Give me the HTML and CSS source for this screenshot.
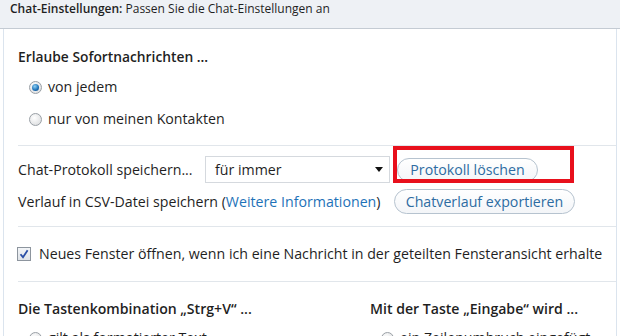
FILE: index.html
```html
<!DOCTYPE html>
<html lang="de">
<head>
<meta charset="utf-8">
<link rel="stylesheet" href="styles.css">
</head>
<body>
<div class="header"><b>Chat-Einstellungen:</b> Passen Sie die Chat-Einstellungen an</div>
<div class="content">
  <section class="group first">
    <div class="heading">Erlaube Sofortnachrichten ...</div>
    <label class="radio-row"><span class="radio checked"></span>von jedem</label>
    <label class="radio-row second"><span class="radio"></span>nur von meinen Kontakten</label>
  </section>
  <section class="group proto">
    <div class="row row1">
      <span class="label">Chat-Protokoll speichern...</span>
      <div class="select"><span>für immer</span><span class="arrow"></span></div>
      <button class="pill">Protokoll löschen</button>
      <span class="highlight"></span>
    </div>
    <div class="row row2">
      <span class="label">Verlauf in CSV-Datei speichern (<a class="link">Weitere Informationen</a>)</span>
      <button class="pill wide">Chatverlauf exportieren</button>
    </div>
  </section>
  <section class="group check">
    <label class="check-row"><span class="checkbox"><svg width="10" height="10" viewBox="0 0 10 10"><path d="M1.5 5.2 L4 8.3 L8.6 1.2" fill="none" stroke="#2b4fa6" stroke-width="1.8"/></svg></span>Neues Fenster öffnen, wenn ich eine Nachricht in der geteilten Fensteransicht erhalte</label>
  </section>
  <section class="cols">
    <div class="col">
      <div class="heading bottom">Die Tastenkombination „Strg+V“ ...</div>
      <label class="radio-row"><span class="radio"></span>gilt als formatierter Text</label>
    </div>
    <div class="col">
      <div class="heading bottom">Mit der Taste „Eingabe“ wird ...</div>
      <label class="radio-row"><span class="radio"></span>ein Zeilenumbruch eingefügt</label>
    </div>
  </section>
</div>
</body>
</html>
```
FILE: styles.css
```css
html, body {
  margin: 0;
  padding: 0;
  background: #ffffff;
  overflow: hidden;
}
body {
  font-family: "Open Sans", "Noto Sans", sans-serif;
  font-size: 14.2px;
  color: #1f1f1f;
  width: 620px;
  height: 336px;
}
.header {
  height: 29px;
  box-sizing: border-box;
  background: #eef1f5;
  border-bottom: 1px solid #c4cbd3;
  padding: 0 0 0 10px;
  line-height: 17px;
  font-size: 12px;
}
.header b { font-weight: 600; }
.content {
  margin-left: 3px;
  margin-right: 3px;
  border-left: 1px solid #dbe4ee;
  border-right: 1px solid #dbe4ee;
  padding: 0 0 0 14px;
  height: 320px;
}
.group {
  border-bottom: 1px solid #e1e6eb;
}
.heading {
  font-weight: 600;
  font-size: 13.8px;
  line-height: 20px;
}
.heading.bottom { font-size: 14.1px; }
.first {
  padding-top: 18px;
  padding-bottom: 16px;
}
.radio-row {
  display: flex;
  align-items: center;
  line-height: 20px;
  padding-left: 11px;
  margin-top: 10px;
}
.radio-row.second { margin-top: 12px; }
.radio {
  width: 13px;
  height: 13px;
  box-sizing: border-box;
  border-radius: 50%;
  border: 1px solid #9aa0a6;
  background: radial-gradient(circle at 40% 35%, #ffffff, #d6d8da);
  margin-right: 6px;
  position: relative;
  flex: none;
}
.radio.checked::after {
  content: "";
  position: absolute;
  left: 2px;
  top: 2px;
  width: 7px;
  height: 7px;
  border-radius: 50%;
  background: radial-gradient(circle at 40% 35%, #8fd1f5, #1b6fb5 60%, #0d3f75);
}
.proto {
  padding: 10px 0 12px;
}
.row {
  display: flex;
  align-items: center;
  line-height: 20px;
}
.row1 {
  height: 27px;
  position: relative;
}
.row2 {
  height: 25px;
  margin-top: 6px;
}
.row1 .label { width: 187px; }
.row2 .label { width: 376px; white-space: nowrap; }
.select {
  width: 185px;
  height: 27px;
  box-sizing: border-box;
  border: 1px solid #d5d9de;
  display: flex;
  align-items: center;
  justify-content: space-between;
  padding: 0 6px 0 9px;
}
.arrow {
  width: 0;
  height: 0;
  border-left: 4px solid transparent;
  border-right: 4px solid transparent;
  border-top: 5px solid #111;
}
.highlight {
  position: absolute;
  left: 375px;
  top: -10px;
  width: 181px;
  height: 37px;
  box-sizing: border-box;
  border: 4px solid #e8101c;
  pointer-events: none;
}
.pill {
  font: inherit;
  color: #2d6ca2;
  background: linear-gradient(#ffffff, #f3f5f8);
  border: 1px solid #b6c3cf;
  border-radius: 13px;
  height: 24px;
  width: 141px;
  margin-left: 7px;
  margin-top: 1px;
  padding: 0;
  line-height: 20px;
  white-space: nowrap;
}
.pill.wide {
  width: 181px;
  margin-left: 0;
  margin-top: 0;
  height: 25px;
}
.link { color: #1e72b8; }
.check {
  padding: 16px 0 17px;
}
.check-row {
  display: flex;
  align-items: center;
  line-height: 21px;
  white-space: nowrap;
}
.checkbox {
  width: 14px;
  height: 14px;
  box-sizing: border-box;
  border: 1px solid #8d959e;
  background: linear-gradient(#f3f5f8, #dfe3e8);
  display: flex;
  align-items: center;
  justify-content: center;
  margin-right: 8px;
  margin-left: -1px;
  flex: none;
}
.cols {
  display: grid;
  grid-template-columns: 352px 1fr;
  padding-top: 17px;
}
.cols .radio-row { margin-top: 9px; }
```
